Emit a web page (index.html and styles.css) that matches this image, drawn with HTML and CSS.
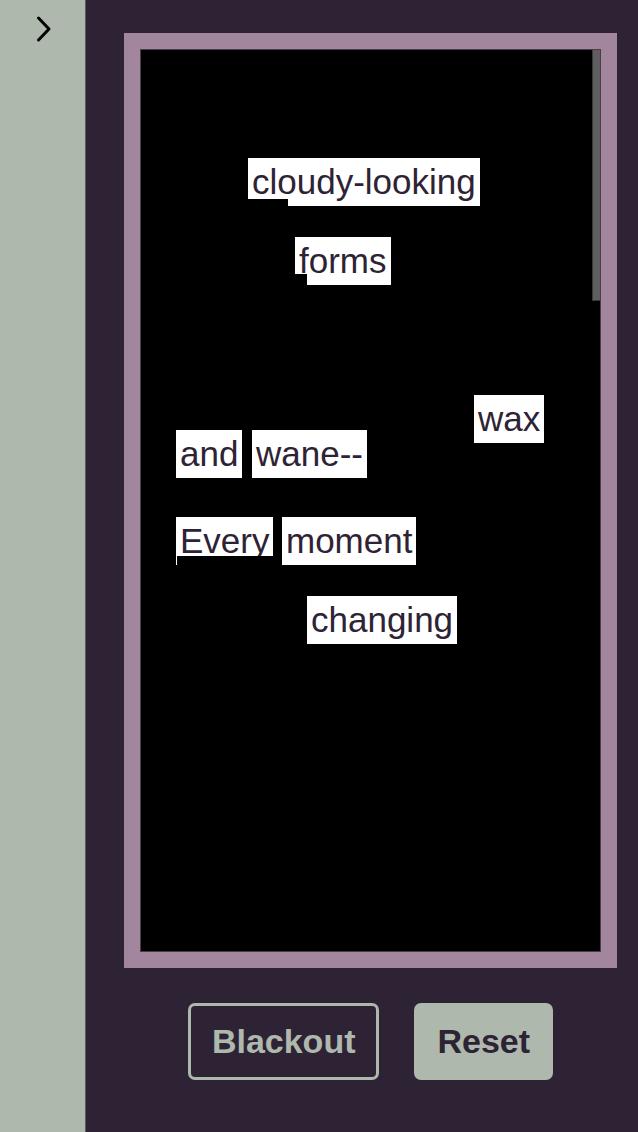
FILE: index.html
```html
<!DOCTYPE html>
<html lang="en">
<head>
  <meta charset="UTF-8" />
  <title>Blackout Poetry</title>
  <link rel="stylesheet" href="styles.css">
</head>
<body>
  <aside class="sidebar">
    <button class="toggle" aria-label="Open menu">
      <svg width="20" height="30" viewBox="0 0 20 30">
        <path d="M3.5 4 L14 15 L3.5 26" fill="none" stroke="#000" stroke-width="3" stroke-linecap="round" stroke-linejoin="round"/>
      </svg>
    </button>
  </aside>

  <main class="main">
    <div class="frame">
      <div class="page">
        <div class="poem">
          <span class="word cut-cloudy" style="left:107px; top:108px">cloudy-looking</span>
          <span class="word cut-forms" style="left:154px; top:187px">forms</span>
          <span class="word" style="left:333px; top:345px">wax</span>
          <span class="word" style="left:35px; top:380px">and</span>
          <span class="word" style="left:111px; top:380px">wane--</span>
          <span class="word cut-every" style="left:35px; top:467px">Every</span>
          <span class="word" style="left:141px; top:467px">moment</span>
          <span class="word" style="left:166px; top:546px">changing</span>
        </div>
        <div class="thumb"></div>
      </div>
    </div>

    <div class="actions">
      <button class="btn btn-outline">Blackout</button>
      <button class="btn btn-solid">Reset</button>
    </div>
  </main>
</body>
</html>
```

FILE: styles.css
```css
html, body { height: 100%; }
body {
  margin: 0;
  display: flex;
  font-family: "Liberation Sans", Arial, sans-serif;
  background: #2e2335;
  overflow: hidden;
}

.sidebar {
  width: 85px;
  flex-shrink: 0;
  background: #aeb8ad;
  border-right: 1px solid #5b5b5b;
}
.toggle {
  display: block;
  margin: 14px 0 0 35px;
  padding: 0;
  background: none;
  border: none;
  cursor: pointer;
}

.main {
  flex: 1;
  padding: 33px 21px 0 38px;
}

.frame {
  border: 17px solid #a1869d;
  background: #a1869d;
}
.page {
  position: relative;
  height: 901px;
  background: #000;
  overflow: hidden;
  box-shadow: 0 0 0 1px #4d3d4a;
}
.thumb {
  position: absolute;
  top: 0;
  right: 0;
  width: 7px;
  height: 250px;
  background: #5f5f5f;
  border-left: 1px solid #3a3a3a;
  border-bottom: 1px solid #3a3a3a;
}

.poem {
  position: relative;
  height: 901px;
}
.word {
  position: absolute;
  padding: 0 4px;
  font-size: 35px;
  line-height: 48px;
  color: #2e2335;
  background: #fff;
  white-space: nowrap;
}
.word::after {
  content: "";
  position: absolute;
  bottom: 0;
  background: #000;
}
.cut-cloudy::after { left: 0; width: 40px; height: 7px; }
.cut-forms::after { left: 0; width: 12px; height: 11px; }
.cut-every::after { left: 1px; right: 0; height: 9px; }

.actions {
  display: flex;
  justify-content: center;
  gap: 35px;
  margin-top: 35px;
}
.btn {
  font-family: "Liberation Sans", Arial, sans-serif;
  font-size: 34px;
  font-weight: bold;
  height: 77px;
  padding: 0 20px;
  border-radius: 7px;
  cursor: pointer;
}
.btn-outline {
  background: transparent;
  color: #aeb8ad;
  border: 3px solid #aeb8ad;
  padding: 0 21px;
}
.btn-solid {
  background: #aeb8ad;
  color: #2e2335;
  border: 3px solid #aeb8ad;
}
```
